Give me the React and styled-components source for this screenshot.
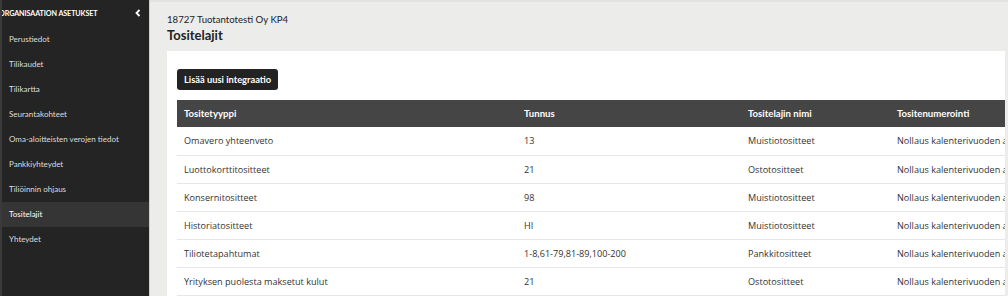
import styled, { createGlobalStyle } from "styled-components";

const GlobalStyle = createGlobalStyle`
  html, body {
    margin: 0;
    padding: 0;
    height: 100%;
    overflow: hidden;
  }
  body {
    font-family: "Lato", "Noto Sans", sans-serif;
    color: #333;
  }
`;

const menuItems = [
  "Perustiedot",
  "Tilikaudet",
  "Tilikartta",
  "Seurantakohteet",
  "Oma-aloitteisten verojen tiedot",
  "Pankkiyhteydet",
  "Tiliöinnin ohjaus",
  "Tositelajit",
  "Yhteydet",
];

const rows = [
  ["Omavero yhteenveto", "13", "Muistiotositteet", "Nollaus kalenterivuoden alussa"],
  ["Luottokorttitositteet", "21", "Ostotositteet", "Nollaus kalenterivuoden alussa"],
  ["Konsernitositteet", "98", "Muistiotositteet", "Nollaus kalenterivuoden alussa"],
  ["Historiatositteet", "HI", "Muistiotositteet", "Nollaus kalenterivuoden alussa"],
  ["Tiliotetapahtumat", "1-8,61-79,81-89,100-200", "Pankkitositteet", "Nollaus kalenterivuoden alussa"],
  ["Yrityksen puolesta maksetut kulut", "21", "Ostotositteet", "Nollaus kalenterivuoden alussa"],
];

function App() {
  return (
    <>
      <GlobalStyle />
      <Layout>
        <Sidebar>
          <SidebarHeader>
            <span>Organisaation asetukset</span>
            <Chevron viewBox="0 0 8 10">
              <path d="M6 1 L2 5 L6 9" fill="none" stroke="#fff" strokeWidth="2.4" />
            </Chevron>
          </SidebarHeader>
          {menuItems.map((item) => (
            <MenuItem key={item} $active={item === "Tositelajit"}>
              {item}
            </MenuItem>
          ))}
        </Sidebar>
        <Main>
          <Company>18727 Tuotantotesti Oy KP4</Company>
          <PageTitle>Tositelajit</PageTitle>
          <Card>
            <Button>Lisää uusi integraatio</Button>
            <TableClip>
              <Table>
                <thead>
                  <tr>
                    <Th $w={340}>Tositetyyppi</Th>
                    <Th $w={224}>Tunnus</Th>
                    <Th $w={149}>Tositelajin nimi</Th>
                    <Th $w={200}>Tositenumerointi</Th>
                  </tr>
                </thead>
                <tbody>
                  {rows.map((r) => (
                    <tr key={r[0]}>
                      {r.map((c, i) => (
                        <Td key={i}>{c}</Td>
                      ))}
                    </tr>
                  ))}
                </tbody>
              </Table>
            </TableClip>
          </Card>
        </Main>
      </Layout>
    </>
  );
}

const Layout = styled.div`
  display: flex;
  height: 296px;
  overflow: hidden;
`;

const Sidebar = styled.nav`
  width: 150px;
  flex-shrink: 0;
  background: #242424;
  border-left: 2px solid #3a3a3a;
  border-right: 1px solid #cfcfcc;
  box-sizing: border-box;
  overflow: hidden;
`;

const SidebarHeader = styled.div`
  display: flex;
  align-items: center;
  justify-content: space-between;
  height: 27px;
  padding: 0 8px 0 0;
  margin-left: -3px;
  color: #fff;
  font-size: 7.2px;
  font-weight: 700;
  letter-spacing: -0.1px;
  text-transform: uppercase;
  white-space: nowrap;
`;

const Chevron = styled.svg`
  width: 6px;
  height: 8px;
  margin-top: -1px;
`;

const MenuItem = styled.div`
  height: 25px;
  line-height: 25px;
  padding-left: 7px;
  font-size: 8px;
  color: ${(p) => (p.$active ? "#fff" : "#dcdcdc")};
  background: ${(p) => (p.$active ? "#353535" : "transparent")};
  white-space: nowrap;
`;

const Main = styled.main`
  flex: 1;
  min-width: 0;
  background: #ececea;
  border-top: 2px solid #e2e2e0;
  padding: 11px 3px 0 17px;
  overflow: hidden;
`;

const Company = styled.div`
  font-size: 9.6px;
  color: #222;
  line-height: 14px;
`;

const PageTitle = styled.h1`
  margin: 0;
  font-size: 13px;
  font-weight: 700;
  color: #222;
  line-height: 16px;
`;

const Card = styled.section`
  margin-top: 8px;
  background: #fff;
  padding: 18px 0 0 10px;
  height: 260px;
  overflow: hidden;
`;

const Button = styled.button`
  display: block;
  height: 21px;
  padding: 0 7px;
  background: #232323;
  color: #fff;
  border: none;
  border-radius: 3px;
  font-family: inherit;
  font-size: 9.3px;
  font-weight: 700;
  cursor: pointer;
`;

const TableClip = styled.div`
  margin-top: 10px;
  overflow: hidden;
`;

const Table = styled.table`
  border-collapse: collapse;
  table-layout: fixed;
  width: 913px;
  white-space: nowrap;
`;

const Th = styled.th`
  width: ${(p) => p.$w}px;
  height: 27px;
  padding: 0 7px;
  background: #454545;
  color: #fff;
  font-size: 9.6px;
  font-weight: 700;
  text-align: left;
  box-sizing: border-box;
`;

const Td = styled.td`
  height: 28px;
  padding: 0 7px;
  font-family: "Open Sans", "Lato", sans-serif;
  font-size: 9.1px;
  color: #333;
  border-bottom: 1px solid #e6e6e6;
  overflow: hidden;
  box-sizing: border-box;
`;

export default App;
